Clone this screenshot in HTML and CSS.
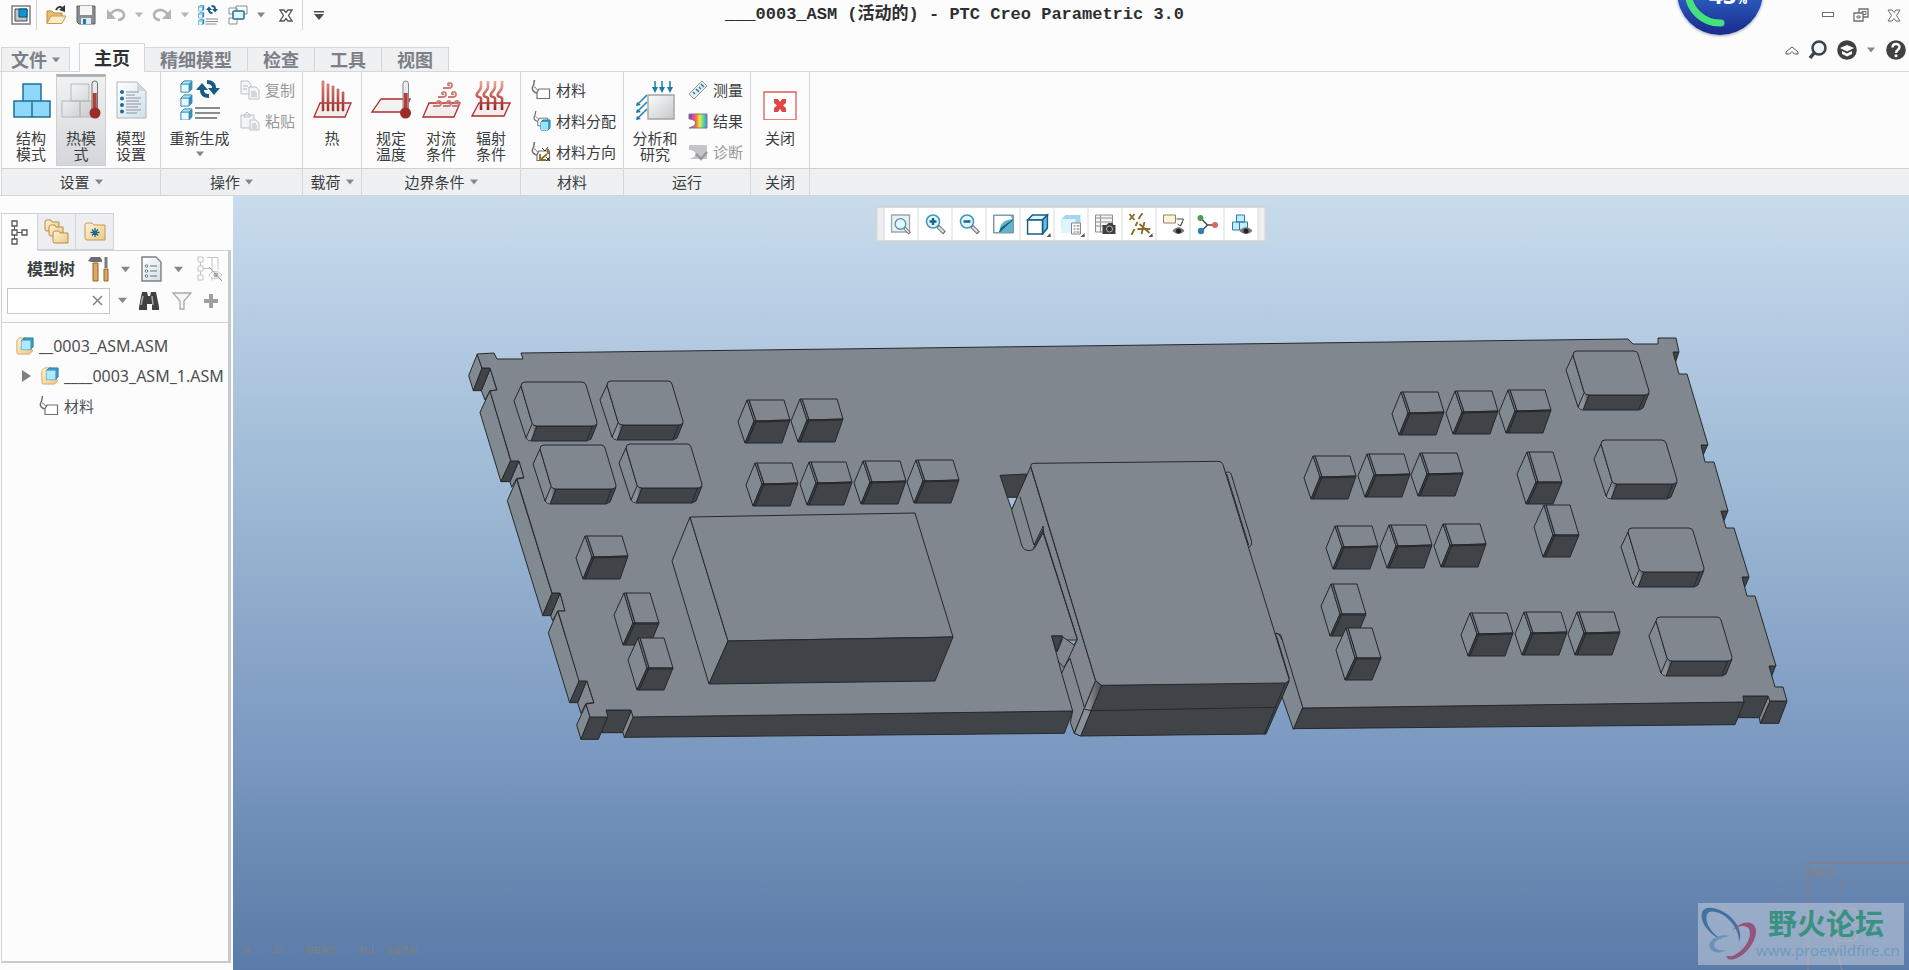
FILE: index.html
```html
<!DOCTYPE html>
<html lang="zh-CN">
<head>
<meta charset="utf-8">
<title>PTC Creo Parametric 3.0</title>
<link rel="stylesheet" href="styles.css">
</head>
<body>
<svg class="defs" aria-hidden="true">
  <defs>
    <linearGradient id="gBlue" x1="0" y1="0" x2="1" y2="1"><stop offset="0" stop-color="#b5eafc"/><stop offset="1" stop-color="#5cc3ee"/></linearGradient>
    <linearGradient id="gGrey" x1="0" y1="0" x2="1" y2="1"><stop offset="0" stop-color="#fcfcfc"/><stop offset="1" stop-color="#c6c8ca"/></linearGradient>
    <linearGradient id="gFolder" x1="0" y1="0" x2="1" y2="1"><stop offset="0" stop-color="#fff3d6"/><stop offset="1" stop-color="#ecc987"/></linearGradient>
    <linearGradient id="gHeat" x1="0" y1="0" x2="0" y2="1"><stop offset="0" stop-color="#f2a79a"/><stop offset="1" stop-color="#96201e"/></linearGradient>
    <linearGradient id="gPaper" x1="0" y1="0" x2="1" y2="1"><stop offset="0" stop-color="#fff"/><stop offset="1" stop-color="#cfe0ea"/></linearGradient>
    <linearGradient id="gRainbow" x1="0" y1="0" x2="1" y2="0"><stop offset="0" stop-color="#6a3be0"/><stop offset=".2" stop-color="#e03cb4"/><stop offset=".4" stop-color="#f07a3c"/><stop offset=".6" stop-color="#f4ea3c"/><stop offset=".8" stop-color="#56d8a0"/><stop offset="1" stop-color="#3b8ef0"/></linearGradient>
    <linearGradient id="gEdge" x1="0" y1="0" x2="1" y2="0"><stop offset="0" stop-color="#8b9198"/><stop offset=".5" stop-color="#8b9198"/><stop offset="1" stop-color="#484b50"/></linearGradient>
  </defs>
  <symbol id="caret" viewBox="0 0 8 6"><path d="M0 .5h8L4 5.500z" fill="currentColor"/></symbol>
  <symbol id="regen" viewBox="0 0 40 40">
    <g stroke="#3d8fb5" stroke-width=".8">
      <path d="M1 4l3-3h8v8l-3 3H1z" fill="#2f8fbd"/><path d="M1 4h8v8H1z" fill="#e6f8ff"/><path d="M1 4l3-3h8L9 4z" fill="#a9e2f8"/>
      <path d="M1 18l3-3h8v8l-3 3H1z" fill="#2f8fbd"/><path d="M1 18h8v8H1z" fill="#e6f8ff"/><path d="M1 18l3-3h8l-3 3z" fill="#a9e2f8"/>
      <path d="M1 32l3-3h8v8l-3 3H1z" fill="#2f8fbd"/><path d="M1 32h8v8H1z" fill="#e6f8ff"/><path d="M1 32l3-3h8l-3 3z" fill="#a9e2f8"/>
    </g>
    <path d="M15 28h25M15 33h25M15 38h22" stroke="#8b8e91" stroke-width="2.200"/>
    <path d="M22 10c0-4 3-6 7-6 4 0 6 2 7 6M36 10M21 8" fill="none" stroke="#155d85" stroke-width="0"/>
    <path d="M27 0c6 0 9 3 9 8h4l-6 7-6-7h4c0-3-2-4-5-4z" fill="#155d85"/>
    <path d="M29 18c-6 0-9-3-9-8h-4l6-7 6 7h-4c0 3 2 4 5 4z" fill="#155d85"/>
  </symbol>
  <symbol id="material" viewBox="0 0 20 20">
    <path d="M4 0C2 1 4 4 2 6c-2 4 1 7 5 7" fill="none" stroke="#6e7174" stroke-width="1.500"/>
    <path d="M8 9h10.500v9.500H6v-6z" fill="#fff" stroke="#6e7174" stroke-width="1.200"/>
    <path d="M3 7c3 0 1 3 5 3" fill="none" stroke="#6e7174"/>
  </symbol>
  <symbol id="part" viewBox="0 0 20 20">
    <path d="M1 4l3-3h7v13h7v2l-3 3H3q-2 0-2-2z" fill="url(#gFolder)" stroke="#d2a452"/>
    <path d="M6 4l3-3h10v10l-3 3H6z" fill="#3d98c3" stroke="#2c7fa8"/><path d="M6 4h10v10H6z" fill="#b0e9fd"/>
  </symbol>
  <symbol id="lens" viewBox="0 0 22 22">
    <path d="M13 13l7 7" stroke="#77797b" stroke-width="4"/><path d="M14 14l5 5" stroke="#e3e4e5" stroke-width="2"/>
    <circle cx="8.500" cy="8.500" r="6.500" fill="#e6f6fd" stroke="#4298be" stroke-width="1.600"/>
  </symbol>
  <symbol id="chipA" overflow="visible">
    <path d="M0 0L7 21-2 43-9 22z" fill="#818a90"/><path d="M0 0H37L43 20 7 21z" fill="#80878f"/><path d="M7 21L43 20 35 43H-2z" fill="#404347"/>
    <path d="M2 0L9 21 0 43M7 22L43 21" fill="none" stroke-width="1.200"/>
  </symbol>
  <symbol id="chipB" overflow="visible">
    <path d="M0 0L9 30-1 52-10 22z" fill="#818a90"/><path d="M0 0H26L35 30H9z" fill="#80878f"/><path d="M9 30H35L26 52H-1z" fill="#404347"/>
    <path d="M2 0L11 30 1 52M9 31H35" fill="none" stroke-width="1.200"/>
  </symbol>
  <symbol id="chipC" overflow="visible">
    <path d="M0 4L11 41 13 44 10 59Q7 59 5 56L-7 19z" fill="#818a90"/><path d="M71 44L76 42 70 57 66 59H10L16 44z" fill="#404347"/>
    <path d="M11 42L16 44 10 59 6 57z" fill="url(#gEdge)" stroke="none"/><path d="M11 42L5 56M16 44L10 59M72 43L66 58" fill="none"/>
    <path d="M0 4Q0 0 4 0H61Q64 0 65 3L76 40Q76 44 71 44H16Q12 44 11 41z" fill="#80878f"/>
  </symbol>
</svg>

<header class="titlebar">
  <div class="quick">
    <button class="q" aria-label="窗口"><svg width="20" height="20" viewBox="0 0 20 20"><path d="M1 1h18v18H1z" fill="#fff" stroke="#7b7f83" stroke-width="1.500"/><path d="M4 4h12v12H4z" fill="#bdc3c8" stroke="#424a51"/><path d="M8 4h8v8H8z" fill="#0c97d6" stroke="#0b4e74"/></svg></button>
    <i class="vline"></i>
    <button class="q" aria-label="打开"><svg width="21" height="20" viewBox="0 0 21 20"><path d="M1 18V6h5l2 2h8v3" fill="#e5bd72" stroke="#b98b3c"/><path d="M1 18.500L5 11h15l-4 7.500z" fill="#fdecc6" stroke="#c79a4c"/><path d="M10 5c2-4 5-4 7-1" fill="none" stroke="#33373a" stroke-width="2"/><path d="M19 0v7l-6-2z" fill="#33373a"/></svg></button>
    <button class="q" aria-label="保存"><svg width="20" height="20" viewBox="0 0 20 20"><path d="M1 1h18v18H3l-2-2z" fill="#8a8d91" stroke="#606367"/><path d="M4 1h12v9H4z" fill="#f5f6f7"/><path d="M5 13h10v6H5z" fill="#dcecf4"/><path d="M7 14h3v5H7z" fill="#257ba2"/></svg></button>
    <button class="q" aria-label="撤消"><svg width="20" height="14" viewBox="0 0 20 14"><path d="M4 7c5-8 14-5 14 0 0 3-3 5-6 5" fill="none" stroke="#b1b3b5" stroke-width="2.600"/><path d="M1 1v10h9z" fill="#b1b3b5"/></svg></button>
    <button class="drop pale" aria-label="撤消列表"><svg width="8" height="6"><use href="#caret"/></svg></button>
    <button class="q" aria-label="重做"><svg width="20" height="14" viewBox="0 0 20 14"><path d="M16 7C11-1 2 2 2 7c0 3 3 5 6 5" fill="none" stroke="#b1b3b5" stroke-width="2.600"/><path d="M19 1v10h-9z" fill="#b1b3b5"/></svg></button>
    <button class="drop pale" aria-label="重做列表"><svg width="8" height="6"><use href="#caret"/></svg></button>
    <button class="q" aria-label="重新生成模型"><svg width="20" height="20"><use href="#regen"/></svg></button>
    <button class="q" aria-label="切换窗口"><svg width="20" height="20" viewBox="0 0 20 20"><g fill="#fff" stroke="#8a8d90"><path d="M8 1h11v8H8zM1 3h8v6H1zM1 13h8v6H1z"/></g><rect x="5" y="6" width="11" height="8" rx="1" fill="#e3f4fb" stroke="#216e94" stroke-width="1.500"/></svg></button>
    <button class="drop" aria-label="窗口列表"><svg width="8" height="6"><use href="#caret"/></svg></button>
    <button class="q wide" aria-label="关闭窗口"><svg width="14" height="13" viewBox="0 0 14 13"><path d="M1 1h4l2 2.500L9 1h4L9.500 6.500 13 12H9L7 9.500 5 12H1l3.500-5.500z" fill="#fff" stroke="#55564d" stroke-width="1.300"/></svg></button>
    <i class="vline"></i>
    <button class="drop dark" aria-label="自定义"><svg width="12" height="9" viewBox="0 0 12 9"><path d="M1 0h10v1.500H1zM1 3h10L6 9z" fill="#4a4c4e"/></svg></button>
  </div>
  <h1 class="title">___0003_ASM (活动的) - PTC Creo Parametric 3.0</h1>
  <div class="winbtns">
    <button aria-label="最小化"><svg width="12" height="6"><rect x=".5" y=".5" width="11" height="4" fill="#fff" stroke="#6b6d6f"/></svg></button>
    <button aria-label="还原"><svg width="16" height="14" viewBox="0 0 16 14"><path d="M6 1h9v8H6z" fill="#fff" stroke="#6b6d6f" stroke-width="1.300"/><path d="M9 3.500h4v3H9z" fill="none" stroke="#6b6d6f"/><path d="M1 5h9v8H1z" fill="#fff" stroke="#6b6d6f" stroke-width="1.300"/><path d="M4 8h3v2H4z" fill="none" stroke="#6b6d6f"/></svg></button>
    <button aria-label="关闭"><svg width="14" height="13" viewBox="0 0 14 13"><path d="M1 1h4l2 2.500L9 1h4L9.500 6.500 13 12H9L7 9.500 5 12H1l3.500-5.500z" fill="#fff" stroke="#6b6d6f"/></svg></button>
  </div>
  <div class="meter"><span>45<small>%</small></span><svg width="86" height="86" viewBox="0 0 86 86"><path d="M11 43A32 32 0 0 0 44 74" fill="none" stroke="#45e27c" stroke-width="7" stroke-linecap="round"/></svg></div>
</header>

<nav class="tabrow">
  <div class="tabs">
    <button class="tab file">文件<svg width="8" height="6"><use href="#caret"/></svg></button>
    <button class="tab active">主页</button>
    <button class="tab">精细模型</button>
    <button class="tab">检查</button>
    <button class="tab">工具</button>
    <button class="tab last">视图</button>
  </div>
  <div class="helpers">
    <button aria-label="折叠功能区"><svg width="14" height="9" viewBox="0 0 14 9"><path d="M1 6l6-5 6 5v2H9.500L7 5.500 4.500 8H1z" fill="#fff" stroke="#55585a"/></svg></button>
    <button aria-label="搜索"><svg width="20" height="20" viewBox="0 0 20 20"><path d="M7 12l-5 6" stroke="#3f4143" stroke-width="3.500"/><circle cx="11" cy="8" r="6.500" fill="#edf7fd" stroke="#3f4143" stroke-width="2.500"/></svg></button>
    <button aria-label="学习"><svg width="20" height="20" viewBox="0 0 20 20"><circle cx="10" cy="10" r="9.800" fill="#3f4143"/><path d="M3 8l7-3 7 3-7 3.500zM5 11l5 2.500 5-2.500v3l-5 2.500-5-2.500z" fill="#fff"/></svg></button>
    <button class="drop" aria-label="学习列表"><svg width="8" height="6"><use href="#caret"/></svg></button>
    <button aria-label="帮助"><svg width="20" height="20" viewBox="0 0 20 20"><circle cx="10" cy="10" r="9.800" fill="#3f4143"/><path d="M6.500 7.500C6.500 3 13.500 3 13.500 7c0 3-3.500 2.500-3.500 6" fill="none" stroke="#fff" stroke-width="2.400"/><circle cx="10" cy="15.800" r="1.500" fill="#fff"/></svg></button>
  </div>
</nav>

<section class="ribbon">
  <div class="group">
    <div class="tools">
      <button class="big"><svg width="40" height="40" viewBox="0 0 40 40"><g fill="#8ed9fa" stroke="#1c6f96" stroke-width="1.500"><path d="M12 4h18v17H12zM3 21h18v16H3zM21 21h18v16H21z"/></g></svg><span>结构<br>模式</span></button>
      <button class="big pressed"><svg width="40" height="40" viewBox="0 0 40 40"><g fill="url(#gGrey)" stroke="#b4b6b8"><path d="M10 4h18v17H10zM1 21h18v16H1zM19 21h14v16H19z"/></g><rect x="31" y="1" width="5.500" height="30" rx="2.700" fill="#e8eaec" stroke="#6d6f72"/><path d="M33.700 13v18" stroke="#b2403a" stroke-width="4"/><circle cx="34" cy="33" r="5.500" fill="#9b2d28"/></svg><span>热模<br>式</span></button>
      <button class="big"><svg width="40" height="40" viewBox="0 0 40 40"><path d="M6 2h20l9 9v27H6z" fill="url(#gPaper)" stroke="#aeb5ba"/><path d="M26 2v9h9z" fill="#c9d9e2"/><path d="M15 12h13M15 15h9M15 18h15M15 21h13M15 24h15M15 27h12M15 30h15M15 33h11" stroke="#8b9298" stroke-width="1"/><g fill="#1b6d95"><circle cx="11" cy="12" r="2"/><circle cx="11" cy="18.500" r="2"/><circle cx="11" cy="25" r="2"/><circle cx="11" cy="31.500" r="2"/></g></svg><span>模型<br>设置</span></button>
    </div>
    <button class="label">设置<svg width="8" height="6"><use href="#caret"/></svg></button>
  </div>
  <div class="group">
    <div class="tools">
      <button class="big long"><svg width="40" height="40"><use href="#regen"/></svg><span>重新生成</span><svg class="under" width="8" height="6"><use href="#caret"/></svg></button>
      <div class="column">
        <button class="small off"><svg width="20" height="20" viewBox="0 0 20 20"><g fill="#f4f5f6" stroke="#bfc1c3"><path d="M1 1h7l3 3v10H1z"/><path d="M9 7h7l3 3v9H9z"/></g><path d="M3 6h5M3 9h4M11 12h5M11 14h6M11 16h6" stroke="#b4b6b8"/></svg>复制</button>
        <button class="small off"><svg width="20" height="20" viewBox="0 0 20 20"><g fill="#f4f5f6" stroke="#bfc1c3"><path d="M1 4h13v13H1zM4 4l3-3 3 3v2H4z"/><path d="M10 9h6l3 3v7h-9z"/></g><path d="M12 13h4M12 15h5M12 17h5" stroke="#b4b6b8"/></svg>粘贴</button>
      </div>
    </div>
    <button class="label">操作<svg width="8" height="6"><use href="#caret"/></svg></button>
  </div>
  <div class="group">
    <div class="tools">
      <button class="big"><svg width="40" height="40" viewBox="0 0 40 40"><path d="M8 23h31l-6 14H2z" fill="#f3eeee" stroke="#b02a2e" stroke-width="1.300"/><path d="M10 1h2v30h-2zM15 4h2v27h-2zM20 6h2v25h-2zM25 9h2v22h-2zM30 12h2v19h-2z" fill="url(#gHeat)" stroke="#b34a44" stroke-width=".6"/></svg><span>热</span></button>
    </div>
    <button class="label">载荷<svg width="8" height="6"><use href="#caret"/></svg></button>
  </div>
  <div class="group">
    <div class="tools">
      <button class="big"><svg width="40" height="40" viewBox="0 0 40 40"><path d="M10 19h29l-6 13H1z" fill="#f1f2f3" stroke="#b02a2e" stroke-width="1.300"/><rect x="32" y="1" width="5.500" height="30" rx="2.700" fill="#e8eaec" stroke="#85878a"/><path d="M34.700 13v18" stroke="#b2403a" stroke-width="4"/><circle cx="34.500" cy="33" r="5.500" fill="#9b2d28"/></svg><span>规定<br>温度</span></button>
      <button class="big"><svg width="40" height="40" viewBox="0 0 40 40"><path d="M8 23h31l-6 14H2z" fill="#f3eeee" stroke="#b02a2e" stroke-width="1.300"/><g fill="none" stroke="#cb7a74" stroke-width="1.800"><path d="M22 8h6c4 0 4-6 0-5-2 1-1 3 1 2M17 17h5c4 0 4-6 0-5-2 1-1 3 1 2M27 17h5c4 0 4-6 0-5-2 1-1 3 1 2M12 26h5c4 0 4-6 0-5-2 1-1 3 1 2M22 26h5c4 0 4-6 0-5-2 1-1 3 1 2M31 26h4c4 0 4-6 0-5-2 1-1 3 1 2"/></g></svg><span>对流<br>条件</span></button>
      <button class="big"><svg width="40" height="40" viewBox="0 0 40 40"><path d="M8 23h31l-6 13H1z" fill="#f3eeee" stroke="#b02a2e" stroke-width="1.300"/><path d="M10 1v6c0 4-6 6-4 9 2 2 5 0 4 5v9M17 1v6c0 4-6 6-4 9 2 2 5 0 4 5v9M24 1v6c0 4-6 6-4 9 2 2 5 0 4 5v9M31 1v6c0 4-6 6-4 9 2 2 5 0 4 5v9" fill="none" stroke="url(#gHeat)" stroke-width="2.600"/></svg><span>辐射<br>条件</span></button>
    </div>
    <button class="label">边界条件<svg width="8" height="6"><use href="#caret"/></svg></button>
  </div>
  <div class="group">
    <div class="tools">
      <div class="column">
        <button class="small"><svg width="20" height="20"><use href="#material"/></svg>材料</button>
        <button class="small"><svg width="20" height="20" viewBox="0 0 20 20"><use href="#material" width="20" height="16"/><path d="M10 11l2-2h7v8l-2 2h-7z" fill="#3fa3d1" stroke="#1c7aa5"/><path d="M10 11h7v8h-7z" fill="#9de0fb"/></svg>材料分配</button>
        <button class="small"><svg width="20" height="20" viewBox="0 0 20 20"><use href="#material"/><path d="M17 7v5M9 12v6h6M9 18l7-6" stroke="#8d6c26" stroke-width="1.800" fill="none"/><path d="M11 6l3 3 3-4M15 15l4 4M19 15l-4 4" stroke="#3c3e40" fill="none"/></svg>材料方向</button>
      </div>
    </div>
    <div class="label">材料</div>
  </div>
  <div class="group">
    <div class="tools">
      <button class="big study"><svg width="40" height="40" viewBox="0 0 40 40"><g stroke="#2686b3" stroke-width="1.600" fill="none"><path d="M20 1v9M27 1v9M35 1v9M12 15L2 25M12 22L2 32M12 29L2 39" /></g><g fill="#1e7ba6"><path d="M17 7h6l-3 6zM24 7h6l-3 6zM32 7h6l-3 6zM1 26l5-1-4-3zM1 33l5-1-4-3zM1 40l5-1-4-3z"/></g><path d="M13 15h26v24H13z" fill="url(#gGrey)" stroke="#a2a4a6" stroke-width="1.400"/></svg><span>分析和<br>研究</span></button>
      <div class="column">
        <button class="small"><svg width="20" height="20" viewBox="0 0 20 20"><path d="M1 14L14 1l5 5L6 19z" fill="#e9edf0" stroke="#8f9497"/><path d="M5 12l2 2M8 9l3 3M11 7l2 2M13 4l3 3" stroke="#2a7da4" stroke-width="1.500"/></svg>测量</button>
        <button class="small"><svg width="20" height="20" viewBox="0 0 20 20"><path d="M1 3h18v14H1l5-2c3-3 1-7-5-7z" fill="url(#gRainbow)" stroke="#777a7d"/></svg>结果</button>
        <button class="small off"><svg width="20" height="20" viewBox="0 0 20 20"><path d="M1 3h18v14H1l5-2c3-3 1-7-5-7z" fill="#c3c5c7"/><path d="M8 12l5 5 6-7" fill="none" stroke="#98999b" stroke-width="2.500"/></svg>诊断</button>
      </div>
    </div>
    <div class="label">运行</div>
  </div>
  <div class="group">
    <div class="tools">
      <button class="big"><svg width="40" height="40" viewBox="0 0 40 40"><path d="M4 12h32v28H4z" fill="#fff" stroke="#e25a5a" stroke-width="1.300"/><path d="M14 19h4l2 3 2-3h4v4l-3 2.500 3 2.500v4h-4l-2-3-2 3h-4v-4l3-2.500-3-2.500z" fill="#e04644"/></svg><span>关闭</span></button>
    </div>
    <div class="label">关闭</div>
  </div>
  <div class="group rest"><div class="tools"></div><div class="label"></div></div>
</section>

<main class="work">
  <aside class="side">
    <div class="sidetabs">
      <button class="stab on" aria-label="模型树"><svg width="18" height="26" viewBox="0 0 18 26"><path d="M3.500 6v4M3.500 15v4M6 12.500h5" stroke="#55585a" fill="none"/><path d="M1 1h5v5H1zM1 10h5v5H1zM1 19h5v5H1zM11 10h5v5h-5z" fill="#fff" stroke="#55585a" stroke-width="1.300"/></svg></button>
      <button class="stab" aria-label="文件夹浏览器"><svg width="26" height="26" viewBox="0 0 26 26"><g fill="url(#gFolder)" stroke="#b98d45"><path d="M1 3q0-2 2-2h4l1 2h7v9H3q-2 0-2-2z"/><path d="M5 8q0-2 2-2h4l1 2h7v9H7q-2 0-2-2z"/><path d="M9 14q0-2 2-2h4l1 2h8v10H11q-2 0-2-2z"/></g></svg></button>
      <button class="stab" aria-label="收藏夹"><svg width="22" height="20" viewBox="0 0 22 20"><path d="M1 3q0-2 2-2h5l2 2h11v15H3q-2 0-2-2z" fill="url(#gFolder)" stroke="#c69a52"/><path d="M11 6v9M6.500 10.500h9M8 7.500l6 6M14 7.500l-6 6" stroke="#176890" stroke-width="1.300"/></svg></button>
    </div>
    <div class="sidebody">
      <div class="treehead">
        <strong>模型树</strong>
        <button aria-label="设置"><svg width="21" height="26" viewBox="0 0 21 26"><path d="M5 7h5v18H5z" fill="#d9a862" stroke="#94652a"/><path d="M0 5l3-4h9l2 3v2H3z" fill="#6a6d71"/><path d="M16.500 1h3v11h-3z" fill="#787b80"/><path d="M16 13h4v12h-4z" fill="#d9a862" stroke="#94652a"/></svg></button>
        <button class="drop" aria-label="设置列表"><svg width="9" height="7"><use href="#caret"/></svg></button>
        <button aria-label="显示"><svg width="21" height="26" viewBox="0 0 21 26"><path d="M1 1h14l5 5v19H1z" fill="url(#gPaper)" stroke="#7b7f82" stroke-width="1.400"/><path d="M9 10h7M9 15h7M9 20h7" stroke="#6e7275"/><g fill="#fff" stroke="#6e7275"><circle cx="5.500" cy="10" r="1.300"/><circle cx="5.500" cy="15" r="1.300"/><circle cx="5.500" cy="20" r="1.300"/></g></svg></button>
        <button class="drop" aria-label="显示列表"><svg width="9" height="7"><use href="#caret"/></svg></button>
        <button class="end" aria-label="隐藏项"><svg width="26" height="26" viewBox="0 0 26 26"><g fill="#fff" stroke="#c2c4c6"><path d="M10 1.500h5v23M15 1.500h6v12M1 1h5v5H1zM1 10h5v5H1zM1 19h5v5H1zM3.500 6v4M3.500 15v4M6 12.500h8"/><path d="M12 19c4-5 8-5 13 0-5 5-9 5-13 0z"/></g><circle cx="19" cy="19" r="2.500" fill="#aaacae"/><path d="M12 11l13 14" stroke="#999b9d"/></svg></button>
      </div>
      <div class="searchrow">
        <div class="search"><input type="text" aria-label="搜索模型树"><button aria-label="清除"><svg width="11" height="11" viewBox="0 0 11 11"><path d="M1 1l9 9M10 1l-9 9" stroke="#808285" stroke-width="1.500"/></svg></button></div>
        <button class="drop" aria-label="搜索选项"><svg width="9" height="7"><use href="#caret"/></svg></button>
        <button aria-label="查找"><svg width="22" height="20" viewBox="0 0 22 20"><path d="M4 1h5l1 4h2l1-4h5l3 15v3h-7v-6H9v6H1v-3z" fill="#3f4143"/><path d="M5 5l-2 9M14 5l1 9" stroke="#a9abad" stroke-width="1.500"/></svg></button>
        <button aria-label="过滤"><svg width="20" height="18" viewBox="0 0 20 18"><path d="M1 1h18l-7 8v8H8V9z" fill="#f6f7f7" stroke="#a8aaac" stroke-width="1.300"/></svg></button>
        <button aria-label="添加"><svg width="14" height="14" viewBox="0 0 14 14"><path d="M5 0h4v5h5v4H9v5H5V9H0V5h5z" fill="#9c9ea0"/></svg></button>
      </div>
      <ul class="tree">
        <li class="root"><svg width="18" height="18"><use href="#part"/></svg><span>__0003_ASM.ASM</span></li>
        <li class="child"><svg class="twist" width="9" height="12" viewBox="0 0 9 12"><path d="M0 0l9 6-9 6z" fill="#7e8082"/></svg><svg width="18" height="18"><use href="#part"/></svg><span>____0003_ASM_1.ASM</span></li>
        <li class="leaf"><svg width="20" height="20"><use href="#material"/></svg><span>材料</span></li>
      </ul>
    </div>
  </aside>

  <section class="view">
    <svg class="scene" viewBox="233 196 1676 774" role="img" aria-label="电路板模型">
      <g stroke="#26282c" stroke-width="1" stroke-linejoin="round">
        <g transform="translate(460 330) scale(.33333)" stroke-width="3">
          <g fill="#818a90">
            <path d="M52 72L66 115 40 182 26 137z"/><path d="M91 115L110 180 90 182 75 210 64 182z"/>
            <path d="M90 182L152 392 123 455 60 247z"/><path d="M177 392L193 443 170 445 155 472 150 455z"/>
            <path d="M170 448L276 790 248 856 142 512z"/><path d="M300 790L316 843 293 843 278 872 272 857z"/>
            <path d="M293 843L358 1052 329 1118 265 908z"/><path d="M380 1052L402 1118 378 1120 363 1150 353 1118z"/>
            <path d="M378 1123L390 1160 363 1228 350 1185z"/>
          </g>
          <g fill="#404347">
            <path d="M66 115H91L64 182H40z"/><path d="M152 392H177L150 455H123z"/><path d="M276 790H300L272 857H248z"/><path d="M358 1052H380L353 1118H329z"/>
            <path d="M437 1141H515L488 1208H425z"/><path d="M390 1160H443L415 1228H363z"/><path d="M520 1160L1838 1143 1813 1210 493 1222z"/>
          </g>
          <path d="M515 1141L520 1160 493 1222 488 1205z" fill="#818a90"/>
        </g>
        <g transform="translate(1280 330) scale(.33333)" stroke-width="3" fill="#404347">
          <path d="M1178 66H1197L1186 98zM1262 345H1283L1270 374zM1324 542H1344L1332 572zM1386 742H1407L1394 772zM1467 1007H1487L1475 1038z"/>
          <path d="M1388 1098H1466L1438 1163H1375z"/><path d="M68 1134L1393 1115 1365 1184 40 1196z"/>
          <path d="M1466 1098L1470 1114 1441 1180 1438 1163z" fill="#818a90"/><path d="M1470 1114H1521L1496 1180H1441z"/>
        </g>
        <path d="M477 354L494 353 497 359H523L521 353 1628 339 1633 344H1658V338H1676L1679 352H1673L1679 374H1687L1708 445H1701L1705 462H1714L1728 511H1721L1726 528H1734L1749 577H1742L1747 596H1755L1776 666H1769L1775 687H1783L1787 701H1770L1768 696H1743L1744 702 1303 708 1280 640 1060 640 1073 711 633 717 631 710H606L608 717H590L586 704 594 703 587 681H579L558 611H565L560 593H552L517 479 524 478 519 461H511L490 391 497 390 490 368H482z" fill="#80878f"/>
        <g transform="translate(960 430) scale(.33333)" stroke-width="3" fill="none">
          <path d="M120 136L200 132 178 205 142 202z" fill="#404347"/><path d="M142 202H172L155 238z" fill="#a8c2db"/>
          <path d="M212 110L155 240 185 345Q190 362 210 362 222 360 226 350L250 305 352 628 342 645 305 618H275L305 730 338 843 331 878 343 910 362 918 425 766z" fill="#80878f"/>
          <path d="M275 618H308L290 665z" fill="#404347"/><path d="M292 665L308 625M295 695L312 712 330 685M305 730L352 628M180 200L222 345 250 288M220 355L250 297M226 350L252 303M250 288V310M250 310L352 628M330 685L373 832M343 908L407 752M212 110L407 752"/>
          <path d="M946 610L962 614 1028 832 1000 898 966 800 985 755z" fill="#80888f"/>
          <path d="M425 766L988 752 918 912 362 918z" fill="#404347"/>
          <path d="M407 752L425 766 362 918 343 910z" fill="url(#gEdge)"/>
          <path d="M212 108Q212 100 222 100L770 94Q786 94 789 104L988 750 978 759 425 766 407 752z" fill="#80878f"/>
          <path d="M375 838L395 842 945 832M975 762L912 914"/>
          <path d="M797 128Q810 122 814 134L875 335Q876 348 867 352M800 132L866 345M946 610Q956 606 966 630M950 620L988 745"/>
        </g>
        <path d="M690 517L728 641 709 684 672 561z" fill="#818a90"/><path d="M690 517L915 513 953 637 728 641z" fill="#80878f"/><path d="M728 641L953 637 935 681 709 684z" fill="#404347"/>
        <use href="#chipC" x="521" y="382"/><use href="#chipC" x="607" y="381"/><use href="#chipC" x="540" y="445"/><use href="#chipC" x="626" y="444"/>
        <use href="#chipC" x="1573" y="351"/><use href="#chipC" x="1601" y="440"/><use href="#chipC" x="1628" y="528"/><use href="#chipC" x="1656" y="617"/>
        <use href="#chipA" x="747" y="400"/><use href="#chipA" x="800" y="399"/><use href="#chipA" x="755" y="463"/><use href="#chipA" x="809" y="462"/><use href="#chipA" x="863" y="461"/><use href="#chipA" x="916" y="460"/><use href="#chipA" x="585" y="536"/>
        <use href="#chipA" x="1401" y="392"/><use href="#chipA" x="1455" y="391"/><use href="#chipA" x="1508" y="390"/><use href="#chipA" x="1313" y="456"/><use href="#chipA" x="1367" y="454"/><use href="#chipA" x="1420" y="453"/><use href="#chipA" x="1335" y="526"/><use href="#chipA" x="1389" y="525"/><use href="#chipA" x="1443" y="524"/><use href="#chipA" x="1470" y="613"/><use href="#chipA" x="1524" y="612"/><use href="#chipA" x="1577" y="612"/>
        <use href="#chipB" x="624" y="593"/><use href="#chipB" x="638" y="638"/><use href="#chipB" x="1527" y="452"/><use href="#chipB" x="1544" y="505"/><use href="#chipB" x="1331" y="584"/><use href="#chipB" x="1346" y="628"/>
      </g>
      <g stroke="#857f87" fill="none"><path d="M1808 970V863H1909" stroke-width="1.500"/><path d="M1840 880l4 3-1 6M1843 884l-9 23"/><path d="M1832 922l7-13h16l6 14-6 18h-16zM1834 940l8 30M1838 910l-4 30M1842 925h40" stroke="#9c8f83"/></g>
      <text class="wcs" x="1811" y="877">WCS</text>
    </svg>
    <div class="viewbar">
      <i></i>
      <button aria-label="重新调整"><svg width="22" height="22" viewBox="0 0 22 22"><path d="M1 2h18v17H1z" fill="#eceeef" stroke="#a3a6a9" stroke-width="1.400"/><use href="#lens" x="3" y="4" width="18" height="18"/></svg></button>
      <button aria-label="放大"><svg width="22" height="22" viewBox="0 0 22 22"><use href="#lens"/><path d="M8.500 5v7M5 8.500h7" stroke="#15658d" stroke-width="2.400"/></svg></button>
      <button aria-label="缩小"><svg width="22" height="22" viewBox="0 0 22 22"><use href="#lens"/><path d="M5 8.500h7" stroke="#15658d" stroke-width="2.400"/></svg></button>
      <button aria-label="重画"><svg width="22" height="22" viewBox="0 0 22 22"><path d="M1 2h20v18H1z" fill="#5fb4cf" stroke="#8a9094"/><path d="M2 3h16l2 3q-13 1-13 13H2z" fill="#fff"/><path d="M20 7l-9 8-4 4 2-4z" fill="#0f5878" stroke="#0f5878"/></svg></button>
      <button class="more" aria-label="显示样式"><svg width="22" height="22" viewBox="0 0 22 22"><g stroke="#175f84" stroke-width="1.600"><path d="M1 7l5-5h15l-5 5z" fill="#dff3fb"/><path d="M16 7l5-5v13l-5 6z" fill="#69bfe2"/><path d="M1 7h15v14H1z" fill="#fff"/></g></svg></button>
      <button class="more" aria-label="已保存方向"><svg width="22" height="22" viewBox="0 0 22 22"><path d="M1 6l4-4h15v14H1z" fill="#9fd8ef"/><path d="M1 6h14v14H1z" fill="#e0f4fc"/><path d="M11 10h9v11h-9z" fill="#fff" stroke="#85888b"/><path d="M13 13h2M16 13h3M13 16h2M16 16h3M13 19h2M16 19h3" stroke="#6c6f72"/></svg></button>
      <button aria-label="视图管理器"><svg width="22" height="22" viewBox="0 0 22 22"><path d="M1 2h17v17H1z" fill="#f3f4f5" stroke="#8d9093"/><path d="M1 5h17M1 9h17M1 13h8M6 2v17" stroke="#8d9093"/><path d="M8 12h4l2-2h4l1 2h2v9H8z" fill="#3f4143"/><circle cx="15" cy="16" r="3" fill="#303234" stroke="#b6b8ba"/></svg></button>
      <button class="more" aria-label="基准显示"><svg width="22" height="22" viewBox="0 0 22 22"><path d="M1 1l5 6M6 1L1 7M14 0l-4 6M9 9l-2 4M6 16l-3 6M16 9l-3 12M11 11l10 9M9 16h13" stroke="#8b6b24" stroke-width="1.800"/></svg></button>
      <button aria-label="注释显示"><svg width="22" height="22" viewBox="0 0 22 22"><path d="M1 2h12v8H1z" fill="#fef3d7" stroke="#8b8474"/><path d="M14 6h7l-3 7M15 11l3 2 2-4" fill="none" stroke="#4b4d4f"/><path d="M10 18c4-5 8-5 12 0-4 4-8 4-12 0z" fill="#77797b"/><circle cx="16" cy="18" r="2.500" fill="#232527"/></svg></button>
      <button aria-label="旋转中心"><svg width="22" height="22" viewBox="0 0 22 22"><path d="M4 5l7 7h7M11 12l-6 6" stroke="#4b4d4f" stroke-width="1.600" fill="none"/><circle cx="4" cy="5" r="3" fill="#559b52"/><circle cx="18.500" cy="12" r="3" fill="#dc6664"/><circle cx="4.500" cy="18" r="3.200" fill="#2d83b0"/></svg></button>
      <button aria-label="模拟显示"><svg width="22" height="22" viewBox="0 0 22 22"><path d="M6 2h8v7H6zM2 9h7v8H2zM9 9h8v8H9z" fill="#c4ebfb" stroke="#2b7da4"/><path d="M9 18c4-5 9-5 13 0-4 4-9 4-13 0z" fill="#77797b"/><circle cx="15.500" cy="18" r="2.500" fill="#232527"/></svg></button>
      <i></i>
    </div>
    <p class="status"><span>热</span><span>:</span><span>3D</span><span>:</span><span>固有模式</span><span>:</span><span>默认</span><span>连接界面</span></p>
    <div class="mark">
      <svg width="60" height="60" viewBox="0 0 60 60"><path d="M41 39C48 22 24 2 9 5-3 9 6 30 24 37 9 27 5 14 11 9 22 5 42 22 41 39z" fill="#44709d"/><path d="M34 28C42 18 56 16 58 27 59 42 40 60 30 56 26 51 30 54 34 53 46 49 55 34 51 26 47 21 40 23 34 28z" fill="#92557c"/><path d="M32 33c-9-3-24 4-20 12 3 6 12 5 16 2-7 1-12-1-12-5 0-5 9-8 16-9z" fill="#6d90b6"/></svg>
      <div><b>野火论坛</b><a href="#">www.proewildfire.cn</a></div>
    </div>
  </section>
</main>
</body>
</html>
```

FILE: styles.css
```css
* { box-sizing: border-box; }
html, body { height: 100%; }
body {
  margin: 0;
  display: flex;
  flex-direction: column;
  background: #fcfcfc;
  color: #3a3d40;
  font: 15px/16px "Noto Sans", "Noto Sans CJK SC", sans-serif;
  overflow: hidden;
}
svg { display: block; flex: none; }
.defs { position: absolute; width: 0; height: 0; }
button {
  display: flex;
  align-items: center;
  justify-content: center;
  margin: 0;
  padding: 0;
  border: 0;
  background: none;
  color: inherit;
  font: inherit;
}
.drop { width: 16px; color: #85878a; }
.drop.pale { color: #b4b6b8; }

/* title bar */
.titlebar {
  position: relative;
  display: grid;
  grid-template-columns: 1fr auto 1fr;
  align-items: center;
  height: 30px;
}
.quick { display: flex; align-items: center; height: 30px; padding-left: 6px; }
.q { width: 30px; height: 30px; }
.q.wide { width: 33px; }
.quick .drop { height: 30px; }
.quick .dark { width: 24px; }
.vline { width: 1px; height: 30px; margin-right: 4px; background: #cfd2d4; }
.title {
  margin: 0;
  color: #2d2f31;
  font: bold 17px/24px "Liberation Mono", "Noto Sans CJK SC", monospace;
}
.winbtns { display: flex; justify-content: flex-end; gap: 3px; }
.winbtns button { width: 30px; height: 24px; }
.meter {
  position: absolute;
  z-index: 2;
  top: -51px;
  right: 146px;
  width: 86px;
  height: 86px;
  border-radius: 50%;
  background: linear-gradient(#2d62c4 50%, #18298c);
  color: #fff;
  box-shadow: 0 1px 3px #9aa0ad;
  overflow: hidden;
}
.meter span {
  position: absolute;
  top: 34px;
  left: 32px;
  font: bold 24px/24px "Open Sans", sans-serif;
}
.meter small { font-size: 12px; }

/* tabs */
.tabrow {
  position: relative;
  z-index: 1;
  display: flex;
  justify-content: space-between;
  height: 42px;
  border-bottom: 1px solid #d5d9dc;
}
.tabs { display: flex; align-items: flex-end; padding-left: 1px; }
.tab {
  height: 24px;
  padding: 0 15px;
  border: 1px solid #d3d7db;
  border-right-width: 0;
  border-bottom: 0;
  background: #eef0f2;
  color: #7c7f87;
  font-size: 18px;
  font-weight: 700;
}
.tab.file { gap: 5px; margin-right: 9px; padding: 0 9px; border-right-width: 1px; }
.tab.last { border-right-width: 1px; }
.tab.active {
  height: 29px;
  margin-bottom: -1px;
  padding: 0 14px;
  border-right-width: 1px;
  background: #fcfcfc;
  color: #2f3235;
}
.tab.active + .tab { border-left-width: 0; }
.helpers { display: flex; align-items: center; gap: 9px; padding: 0 3px 1px 0; }
.helpers .drop { width: 8px; margin-left: 1px; margin-right: 2px; }

/* ribbon */
.ribbon { display: flex; height: 124px; padding-left: 1px; border-bottom: 1px solid #d0d4d8; }
.group { display: flex; flex-direction: column; border-right: 1px solid #d3d7da; }
.group:first-child { border-left: 1px solid #d3d7da; }
.rest { flex: 1; border-right: 0; }
.tools { display: flex; flex: 1; padding: 2px 4px 0; }
.label {
  display: flex;
  align-items: center;
  justify-content: center;
  gap: 5px;
  height: 27px;
  border-top: 1px solid #cdd1d5;
  background: #eef0f2;
}
.label svg, .under, .tab svg { color: #85878a; }
.big {
  flex-direction: column;
  justify-content: flex-start;
  width: 50px;
  height: 92px;
  padding-top: 6px;
}
.big span { margin-top: 10px; white-space: nowrap; }
.big.long { width: 69px; }
.big.study { width: 54px; }
.under { margin-top: 5px; }
.pressed {
  border: 1px solid #cdcfd1;
  border-top: 3px solid #b1b3b5;
  padding-top: 3px;
  background: linear-gradient(#f0f1f2, #d4d6d9);
}
.column { display: flex; flex-direction: column; padding: 0 3px 0 6px; }
.small { justify-content: flex-start; gap: 5px; height: 31px; white-space: nowrap; }
.off { color: #96989b; }

/* work area */
.work { display: flex; flex: 1; min-height: 0; }
.side { display: flex; flex-direction: column; width: 233px; padding: 17px 2px 7px 1px; }
.sidetabs { display: flex; height: 37px; }
.stab { width: 38px; border: 1px solid #cfd3d8; border-left-width: 0; background: #eceef1; }
.stab.on {
  z-index: 1;
  width: 37px;
  margin-bottom: -1px;
  border-left-width: 1px;
  border-bottom: 0;
  background: #fcfcfc;
}
.sidebody {
  flex: 1;
  border: 1px solid #cfd3d8;
  border-right: 3px solid #c7cbcf;
  border-bottom: 2px solid #c7cbcf;
}
.treehead { display: flex; align-items: center; height: 36px; padding: 0 5px 0 25px; }
.treehead strong { margin-right: 13px; font-size: 16px; }
.treehead .drop { width: 32px; }
.treehead .end { margin-left: auto; }
.searchrow {
  display: flex;
  align-items: center;
  gap: 12px;
  height: 36px;
  padding: 0 8px 8px 5px;
  border-bottom: 1px solid #cfd3d8;
}
.searchrow .drop { width: 8px; margin-left: -4px; }
.search {
  display: flex;
  width: 103px;
  height: 26px;
  border: 1px solid #c3c7cb;
  background: #fff;
}
.search input { flex: 1; min-width: 0; border: 0; outline: 0; background: none; }
.search button { width: 24px; }
.tree { margin: 0; padding: 8px 0 0; list-style: none; color: #4d4f52; }
.tree li { display: flex; align-items: center; gap: 5px; height: 30px; white-space: nowrap; }
.tree span { font-size: 16px; }
.tree .leaf span { font-size: 15px; }
.tree .root { padding-left: 14px; }
.tree .child { padding-left: 20px; }
.tree .twist { margin-right: 5px; }
.tree .leaf { padding-left: 37px; }

/* viewport */
.view {
  position: relative;
  flex: 1;
  min-width: 0;
  background: linear-gradient(#c8dcec, #b5cbe2 17%, #9fbbd6 36%, #7b98c0 72%, #6d8db5 83%, #5b7ba9);
}
.scene { width: 100%; height: 100%; }
.wcs { fill: #8a8082; font: 13px "Liberation Mono", monospace; }
.viewbar {
  position: absolute;
  top: 10px;
  left: 50%;
  display: flex;
  gap: 1px;
  padding: 1px;
  border: 1px solid #d0d3d6;
  background: #d6dade;
  transform: translateX(-50%);
}
.viewbar i { width: 6px; background: #eceef0; }
.viewbar button { position: relative; width: 33px; height: 32px; background: #fff; }
.viewbar .more::after {
  content: "";
  position: absolute;
  right: 3px;
  bottom: 3px;
  border: 2px solid #55585a;
  border-top-color: transparent;
  border-left-color: transparent;
}
.status {
  position: absolute;
  left: 9px;
  bottom: 14px;
  display: flex;
  gap: 10px;
  margin: 0;
  color: #83807f;
  font-size: 8px;
  line-height: 12px;
}
.mark {
  position: absolute;
  right: 5px;
  bottom: 5px;
  display: flex;
  width: 206px;
  height: 62px;
  background: rgba(202, 210, 226, .52);
}
.mark div { display: flex; flex-direction: column; margin-left: -2px; }
.mark b { padding: 6px 0 0 12px; color: #3b9181; font-size: 29px; line-height: 30px; }
.mark a { color: #6f9bb9; font-size: 15px; line-height: 22px; text-decoration: none; }
```
